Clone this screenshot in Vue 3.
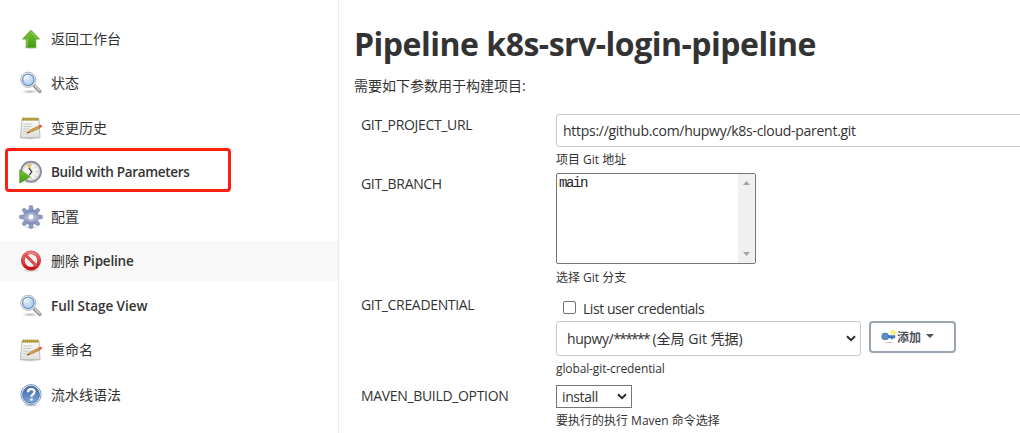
<script setup>
const tasks = [
  { icon: 'up', text: '返回工作台', cls: 'cjk' },
  { icon: 'search', text: '状态', cls: 'cjk' },
  { icon: 'notepad', text: '变更历史', cls: 'cjk' },
  { icon: 'clock', text: 'Build with Parameters', cls: 'build' },
  { icon: 'gear', text: '配置', cls: 'cjk' },
  { icon: 'delete', text: '删除', tail: 'Pipeline', cls: 'cjk', hover: true },
  { icon: 'search', text: 'Full Stage View', cls: 'stage' },
  { icon: 'notepad', text: '重命名', cls: 'cjk' },
  { icon: 'help', text: '流水线语法', cls: 'cjk' },
]
const teeth = [0, 45, 90, 135, 180, 225, 270, 315]
</script>

<template>
  <div class="page">
    <svg class="defs" width="0" height="0">
      <defs>
        <linearGradient id="green" x1="0" y1="0" x2="0" y2="1"><stop offset="0" stop-color="#7cc63c" /><stop offset="1" stop-color="#43990d" /></linearGradient>
        <radialGradient id="lens" cx=".4" cy=".35" r=".7"><stop offset="0" stop-color="#e6f1fc" /><stop offset="1" stop-color="#a5c6ea" /></radialGradient>
        <linearGradient id="paper" x1="0" y1="0" x2="0" y2="1"><stop offset="0" stop-color="#fdfdfd" /><stop offset="1" stop-color="#dededc" /></linearGradient>
        <linearGradient id="gearFill" x1="0" y1="0" x2="0" y2="1"><stop offset="0" stop-color="#7288b4" /><stop offset=".55" stop-color="#a5aed0" /><stop offset="1" stop-color="#8086b4" /></linearGradient>
        <linearGradient id="red" x1="0" y1="0" x2="0" y2="1"><stop offset="0" stop-color="#e98080" /><stop offset="1" stop-color="#d00d10" /></linearGradient>
        <linearGradient id="blue" x1="0" y1="0" x2="0" y2="1"><stop offset="0" stop-color="#3a68a6" /><stop offset="1" stop-color="#7fa7d8" /></linearGradient>
        <radialGradient id="shade"><stop offset="0" stop-color="#777" stop-opacity=".55" /><stop offset="1" stop-color="#777" stop-opacity="0" /></radialGradient>
      </defs>
    </svg>

    <aside class="side">
      <div v-for="(t, i) in tasks" :key="i" class="task" :class="{ hover: t.hover }">
        <svg class="icon" width="24" height="24" viewBox="0 0 24 24">
          <g v-if="t.icon === 'up'">
            <ellipse cx="12" cy="20.6" rx="8.5" ry="1.8" fill="url(#shade)" />
            <path d="M12 3.2 20.4 12h-3.6v8.3H7.2V12H3.6z" fill="url(#green)" stroke="#5aa52b" stroke-width=".9" stroke-linejoin="round" />
            <path d="M12 4.8 18.2 11.2M8.2 11.2v8" stroke="#9dd773" stroke-width=".8" fill="none" />
          </g>
          <g v-else-if="t.icon === 'search'">
            <ellipse cx="11" cy="20.7" rx="8.5" ry="2" fill="url(#shade)" />
            <path d="M15.3 14.8 20.8 20.3" stroke="#8f8f8f" stroke-width="3.6" stroke-linecap="round" />
            <path d="M16 14.8 20.8 19.6" stroke="#cdcdcd" stroke-width="1.7" stroke-linecap="round" />
            <circle cx="9.3" cy="8.8" r="7.6" fill="#f5f5f3" stroke="#b7b6b1" stroke-width="1" />
            <circle cx="9.3" cy="8.8" r="5.8" fill="url(#lens)" stroke="#608fc8" stroke-width="1.2" />
            <path d="M5.2 8.6c.1-2.8 2.2-4.2 5-4.3" stroke="#fff" stroke-width="1.3" fill="none" />
          </g>
          <g v-else-if="t.icon === 'notepad'">
            <ellipse cx="11" cy="22" rx="11" ry="1.8" fill="url(#shade)" />
            <path d="M3 3h17l1 18.7H1.4z" fill="url(#paper)" stroke="#b4b4b1" stroke-width=".9" />
            <path d="M3 2h17v2.4H3z" fill="#c3b04e" />
            <path d="M4.2 1.3v3.6M6.2 1.3v3.6M8.2 1.3v3.6M10.2 1.3v3.6M12.2 1.3v3.6M14.2 1.3v3.6M16.2 1.3v3.6M18.2 1.3v3.6" stroke="#9c882a" stroke-width=".8" />
            <path d="M4.3 8h9M4.3 10.5h8M4.3 13h6M4.3 15.5h4" stroke="#c2c2c2" stroke-width=".9" />
            <path d="m8 17.3 2.6-2.9 9.5-4.6 1.1 2.1-9.7 4.3z" fill="#dca249" stroke="#a8752f" stroke-width=".7" />
            <path d="m19.5 9.7 2.2-.9c1.3-.3 2 1.6.9 2.3l-2 .9z" fill="#e45d50" />
            <path d="m8 17.3 1.4-1.6.8 1z" fill="#42372a" />
          </g>
          <g v-else-if="t.icon === 'clock'">
            <ellipse cx="12" cy="22" rx="9" ry="1.8" fill="url(#shade)" />
            <circle cx="12" cy="11.7" r="9.9" fill="#f2f2ec" stroke="#8a8a9c" stroke-width="1.9" />
            <circle cx="12" cy="11.7" r="8.2" fill="none" stroke="#c8c9ce" stroke-width=".8" />
            <path d="M11.6 9.8 7.2 5.2Q9.4 3.4 12 3.6z" fill="#e9c568" />
            <path d="m9.8 8.2 3 3.4-2.4 3.5" fill="none" stroke="#333" stroke-width="1.1" />
            <path d="M12 4v1.5M18.9 11.7h-1.4M12 19v-1.5M17 6.8l-.8.8M17 16.6l-.8-.8" stroke="#aaa" />
            <path d="M.8 9.8 11 16.7.8 23z" fill="url(#green)" stroke="#449717" stroke-width=".8" />
          </g>
          <g v-else-if="t.icon === 'gear'">
            <ellipse cx="12" cy="22.3" rx="8" ry="1.4" fill="url(#shade)" />
            <g fill="#8f9bc2" stroke="#7080a8" stroke-width=".6">
              <path v-for="a in teeth" :key="a" d="M9.6 5.5 10.6.7h2.8l1 4.8z" :transform="`rotate(${a} 12 12)`" />
            </g>
            <circle cx="12" cy="12" r="7.6" fill="url(#gearFill)" />
            <circle cx="12" cy="12" r="4.3" fill="#c0c7e0" />
            <circle cx="12" cy="12" r="3" fill="#fff" stroke="#7782ab" stroke-width=".6" />
          </g>
          <g v-else-if="t.icon === 'delete'">
            <ellipse cx="12" cy="21.3" rx="9.5" ry="1.9" fill="url(#shade)" />
            <circle cx="12" cy="11.5" r="8.2" fill="#f7eeee" stroke="#c9383b" stroke-width="3.6" />
            <circle cx="12" cy="11.5" r="8.2" fill="none" stroke="url(#red)" stroke-width="2.7" />
            <path d="m6.3 5.8 11.4 11.4" stroke="#cb3c3e" stroke-width="3" />
            <path d="m6.3 5.8 11.4 11.4" stroke="#e05253" stroke-width="2" />
          </g>
          <g v-else>
            <ellipse cx="12" cy="22" rx="9" ry="1.9" fill="url(#shade)" />
            <circle cx="12" cy="11.7" r="10.1" fill="#fff" stroke="#7791b8" stroke-width="1" />
            <circle cx="12" cy="11.7" r="8.5" fill="url(#blue)" stroke="#3a669f" stroke-width=".8" />
            <path d="M8.9 9.2c0-4.2 6.6-4 6.6-.4 0 2.5-3.1 2.6-3.1 5" fill="none" stroke="#fff" stroke-width="2.3" />
            <path d="M11.1 15.4h2.6v2.2h-2.6z" fill="#fff" />
          </g>
        </svg>
        <span :class="t.cls">{{ t.text }}</span><span v-if="t.tail" class="tail">{{ t.tail }}</span>
      </div>
      <div class="mark"></div>
    </aside>

    <main class="main">
      <h1>Pipeline k8s-srv-login-pipeline</h1>
      <p class="intro">需要如下参数用于构建项目:</p>

      <div class="row url">
        <label>GIT_PROJECT_URL</label>
        <div class="control">
          <div class="input">https://github.com/hupwy/k8s-cloud-parent.git</div>
          <div class="help">项目 Git 地址</div>
        </div>
      </div>

      <div class="row branch">
        <label>GIT_BRANCH</label>
        <div class="control">
          <div class="list">
            <span class="opt">main</span>
            <div class="bar">
              <svg width="7" height="4" viewBox="0 0 7 4"><path d="M0 4 3.5 0 7 4z" fill="#a3a3a3" /></svg>
              <svg width="7" height="4" viewBox="0 0 7 4"><path d="M0 0h7L3.5 4z" fill="#a3a3a3" /></svg>
            </div>
          </div>
          <div class="help">选择 Git 分支</div>
        </div>
      </div>

      <div class="row cred">
        <label>GIT_CREADENTIAL</label>
        <div class="control">
          <div class="check"><i class="box"></i><span>List user credentials</span></div>
          <div class="pick">
            <div class="select">
              <span><span class="user">hupwy/</span><span class="stars">******</span> (全局 Git 凭据)</span>
              <svg width="10" height="7" viewBox="0 0 10 7"><path d="m1 1.2 4 3.9 4-3.9" fill="none" stroke="#2b2b2b" stroke-width="2" /></svg>
            </div>
            <div class="add">
              <svg width="16" height="16" viewBox="0 0 16 16">
                <ellipse cx="8" cy="13.6" rx="6" ry="1" fill="url(#shade)" />
                <path d="M5 6.2h9.2v3H12v1h-2v-1H6z" fill="#4678b7" />
                <circle cx="4.2" cy="7.4" r="3.4" fill="#5a8dcb" stroke="#3a6aa5" stroke-width=".7" />
                <circle cx="12.3" cy="3.4" r="1.8" fill="#fffbd0" stroke="#f7e73c" stroke-width="1.3" />
              </svg>
              <span class="addtext">添加</span>
              <svg class="caret" width="8" height="4" viewBox="0 0 8 4"><path d="M0 0h8L4 4z" fill="#4d545d" /></svg>
            </div>
          </div>
          <div class="help global">global-git-credential</div>
        </div>
      </div>

      <div class="row maven">
        <label>MAVEN_BUILD_OPTION</label>
        <div class="control">
          <div class="mini">
            <span>install</span>
            <svg width="10" height="7" viewBox="0 0 10 7"><path d="m1 1.2 4 3.9 4-3.9" fill="none" stroke="#2b2b2b" stroke-width="2" /></svg>
          </div>
          <div class="help">要执行的执行 Maven 命令选择</div>
        </div>
      </div>
    </main>
  </div>
</template>

<style>
body { background: #fff; overflow: hidden; }
</style>

<style scoped>
* { box-sizing: border-box; }
.page {
  width: 1020px; height: 433px; overflow: hidden; display: flex; background: #fff; color: #333;
  font: 14px/20px "Open Sans", "Noto Sans CJK SC", sans-serif; white-space: nowrap;
}
.defs { position: absolute; }
.side { position: relative; flex: none; width: 339px; border-right: 1px solid #e4eeee; padding-top: 18.5px; display: flex; flex-direction: column; gap: 4.5px; }
.task { height: 40px; flex: none; display: flex; align-items: center; padding-left: 19px; }
.task.hover { background: #f8f8f8; }
.icon { flex: none; margin-right: 8px; }
.build, .stage, .tail { font-weight: 600; font-size: 13.5px; }
.build { letter-spacing: -0.31px; }
.stage { letter-spacing: -0.05px; }
.tail { margin-left: 4px; letter-spacing: -0.2px; }
.mark { position: absolute; left: 5px; top: 148px; width: 226px; height: 44px; border: 3px solid #fc1f12; border-radius: 4px; }
.main { flex: none; width: 700px; padding-left: 15px; }
h1 { margin: 24px 0 0; font-size: 32px; line-height: 40px; font-weight: 700; letter-spacing: -0.5px; }
.intro { margin: 12px 0 18px; line-height: 20px; }
.row { display: flex; padding-left: 7px; }
.row label { width: 195px; flex: none; padding-top: 1px; letter-spacing: -0.33px; }
.control { flex: 1; }
.help { font-size: 12px; line-height: 16px; }
.url { height: 59px; }
.input { height: 33px; border: 1px solid #c9c9c9; border-radius: 3px; padding: 6px 6px; line-height: 20px; letter-spacing: -0.28px; }
.url .help { margin-top: 5px; }
.branch { height: 121px; }
.list { width: 200px; height: 91px; border: 1px solid #767676; border-radius: 2px; display: flex; justify-content: space-between; padding-left: 2px; }
.opt { font: 14px/19px "Liberation Mono", monospace; letter-spacing: -1.4px; color: #222; }
.bar { width: 17px; background: #f0f0f0; display: flex; flex-direction: column; justify-content: space-between; align-items: center; padding: 7px 0; }
.branch .help { margin-top: 6px; }
.cred { height: 91px; }
.check { height: 27px; display: flex; align-items: center; padding: 2px 0 0 7px; letter-spacing: -0.44px; }
.box { width: 13px; height: 13px; border: 1px solid #767676; border-radius: 2px; margin: -2px 7px 0 0; }
.pick { display: flex; gap: 8px; }
.select { width: 305px; height: 35px; border: 1px solid #c9c9c9; border-radius: 3px; display: flex; align-items: center; justify-content: space-between; padding: 0 4px 0 10px; }
.user { letter-spacing: -0.4px; }
.stars { letter-spacing: -1.8px; }
.add { width: 87px; height: 32px; border: 2px solid #98a5b0; border-radius: 4px; display: flex; align-items: center; padding-left: 10px; font-size: 12px; font-weight: 600; color: #4d545d; }
.addtext { position: relative; top: 1px; }
.caret { margin: -2px 0 0 5px; }
.cred .help { margin-top: 5px; }
.global { letter-spacing: -0.12px; }
.mini { width: 76px; height: 23px; border: 1px solid #767676; display: flex; align-items: center; justify-content: space-between; padding: 0 4px 0 5px; letter-spacing: -0.4px; }
.maven .help { margin-top: 5px; }
</style>
